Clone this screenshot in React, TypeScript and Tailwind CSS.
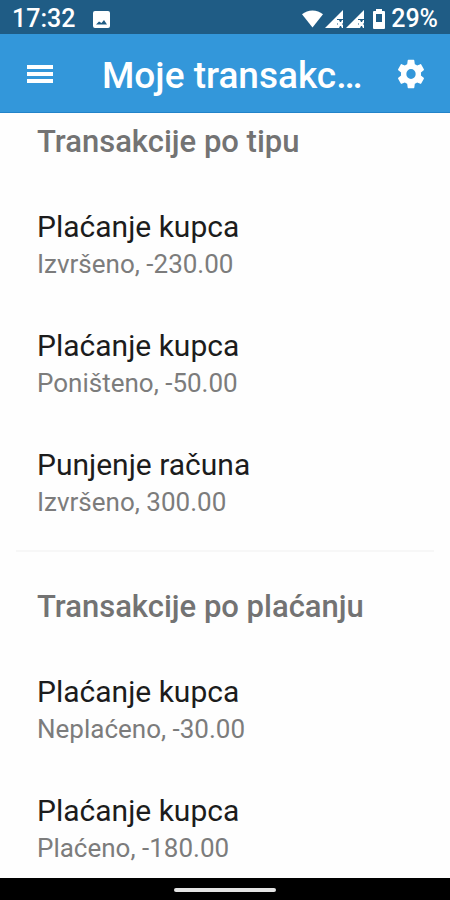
type Transaction = { title: string; detail: string };
type Group = { heading: string; items: Transaction[] };

const groups: Group[] = [
  {
    heading: "Transakcije po tipu",
    items: [
      { title: "Plaćanje kupca", detail: "Izvršeno, -230.00" },
      { title: "Plaćanje kupca", detail: "Poništeno, -50.00" },
      { title: "Punjenje računa", detail: "Izvršeno, 300.00" },
    ],
  },
  {
    heading: "Transakcije po plaćanju",
    items: [
      { title: "Plaćanje kupca", detail: "Neplaćeno, -30.00" },
      { title: "Plaćanje kupca", detail: "Plaćeno, -180.00" },
    ],
  },
];

function SignalIcon() {
  return (
    <svg className="h-[18px] w-[18px]" viewBox="0 0 18 18" fill="currentColor" aria-hidden="true">
      <path d="M18 0v9h-6v9H0z" />
      <path d="M12 10h2l1 2h1l1-2h1v3l-1 1 1 1v3h-1l-1-2h-1l-1 2h-2v-3l1-1-1-1z" />
    </svg>
  );
}

function StatusBar() {
  return (
    <div className="flex h-[34px] items-center bg-[#1f5c85] pl-3 pr-3 pt-1 text-[25px] font-medium leading-8 text-white">
      <span>17:32</span>
      <svg className="ml-[18px] h-[17px] w-[17px]" viewBox="0 0 17 17" aria-hidden="true">
        <path
          fill="currentColor"
          fillRule="evenodd"
          d="M2 0h13a2 2 0 0 1 2 2v13a2 2 0 0 1-2 2H2a2 2 0 0 1-2-2V2a2 2 0 0 1 2-2zM3 13.500h11L11 9l-2.500 3L6 10.500z"
        />
      </svg>
      <div className="ml-auto flex items-center">
        <svg className="h-[18px] w-[21px]" viewBox="0 0 22 18" fill="currentColor" aria-hidden="true">
          <path d="M0 4C6-1.300 16-1.300 22 4L11 18z" />
        </svg>
        <span className="ml-[2px] flex gap-[3px]">
          <SignalIcon />
          <SignalIcon />
        </span>
        <svg className="ml-[9px] h-[20px] w-[12px]" viewBox="0 0 12 20" aria-hidden="true">
          <path
            fill="currentColor"
            fillRule="evenodd"
            d="M3 0h6v2h2a1 1 0 0 1 1 1v16a1 1 0 0 1-1 1H1a1 1 0 0 1-1-1V3a1 1 0 0 1 1-1h2zM3 5v8h6V5z"
          />
        </svg>
        <span className="ml-[6px]">29%</span>
      </div>
    </div>
  );
}

function AppBar() {
  return (
    <header className="flex h-[79px] items-center border-b border-[#2383c9] bg-[#3397da] pl-[27px] pr-[23px] pt-[2px] text-white">
      <button type="button" aria-label="Meni" className="shrink-0">
        <svg className="h-[18px] w-[26px]" viewBox="0 0 26 18" fill="currentColor" aria-hidden="true">
          <path d="M0 0h26v4H0zM0 7h26v4H0zM0 14h26v4H0z" />
        </svg>
      </button>
      <h1 className="ml-[49px] min-w-0 flex-1 truncate pt-1 text-[37px] font-medium leading-[48px]">
        Moje transakc…
      </h1>
      <button type="button" aria-label="Postavke" className="shrink-0">
        <svg className="h-[34px] w-8" viewBox="0 0 24 24" preserveAspectRatio="none" fill="currentColor" aria-hidden="true">
          <path d="M19.430 12.980c.040-.320.070-.640.070-.980s-.030-.660-.070-.980l2.110-1.650c.190-.150.240-.420.120-.640l-2-3.460c-.120-.220-.390-.300-.610-.220l-2.490 1c-.520-.400-1.080-.730-1.690-.980l-.380-2.650C14.460 2.180 14.250 2 14 2h-4c-.250 0-.460.180-.490.420l-.380 2.650c-.610.250-1.170.590-1.690.980l-2.490-1c-.230-.090-.490 0-.610.220l-2 3.460c-.130.220-.070.490.120.640l2.110 1.650c-.040.320-.070.650-.070.980s.030.660.070.980l-2.110 1.650c-.190.150-.240.420-.120.640l2 3.460c.120.220.390.300.610.220l2.490-1c.520.400 1.080.730 1.690.980l.380 2.650c.030.240.240.420.490.420h4c.250 0 .460-.180.490-.420l.380-2.650c.610-.250 1.170-.590 1.690-.980l2.490 1c.230.090.490 0 .610-.220l2-3.460c.120-.220.070-.490-.120-.640zM12 15.500a3.500 3.500 0 1 1 0-7 3.500 3.500 0 0 1 0 7z" />
        </svg>
      </button>
    </header>
  );
}

export default function App() {
  return (
    <div className="flex min-h-screen flex-col bg-[#fefefe] font-['Roboto',sans-serif]">
      <StatusBar />
      <AppBar />
      <main className="flex-1 pb-2 pt-[11px]">
        {groups.map((group, index) => (
          <section key={group.heading}>
            {index > 0 && <hr className="mx-4 mb-[37px] mt-[30px] border-t-2 border-[#f7f7f7]" />}
            <h2 className="px-[37px] text-[31px] font-medium leading-9 text-[#737373]">{group.heading}</h2>
            <ul className="mt-12 flex flex-col gap-[45px] px-[37px]">
              {group.items.map((item) => (
                <li key={item.detail}>
                  <p className="text-[30px] leading-[38px] text-[#1c1c1c]">{item.title}</p>
                  <p className="text-[26px] leading-9 text-[#7c7c7c]">{item.detail}</p>
                </li>
              ))}
            </ul>
          </section>
        ))}
      </main>
      <footer className="flex h-[22px] items-center justify-center bg-black pt-[2px]">
        <div className="h-1 w-[102px] rounded-full bg-[#e4e4e4]" />
      </footer>
    </div>
  );
}
